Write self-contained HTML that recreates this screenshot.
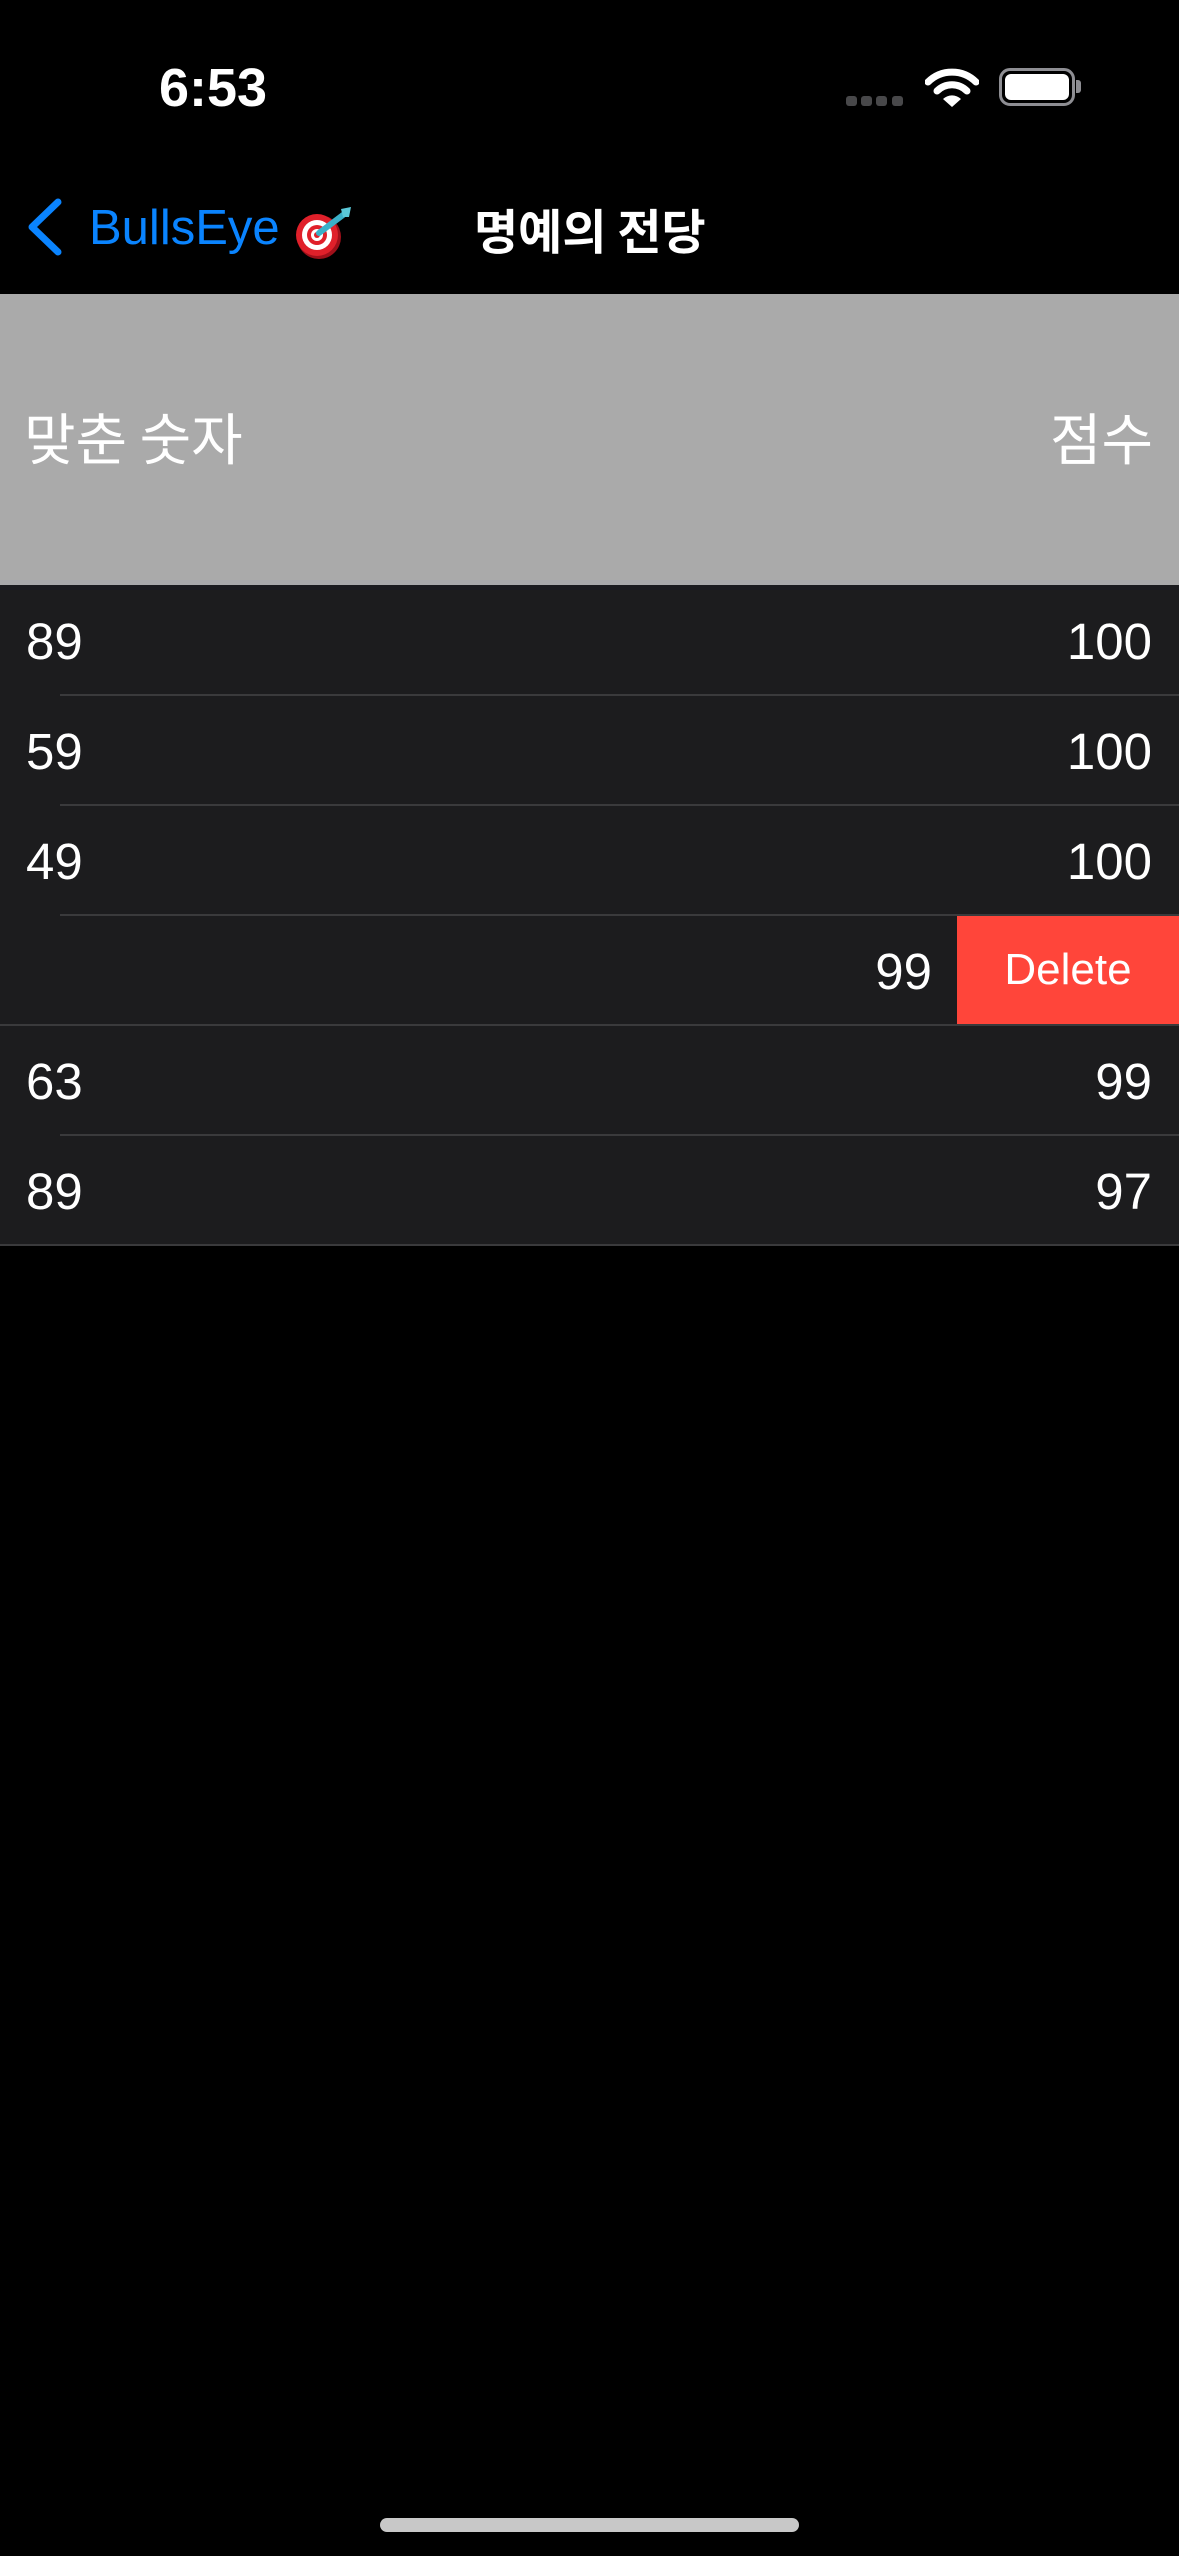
<!DOCTYPE html>
<html><head><meta charset="utf-8"><style>
*{margin:0;padding:0;box-sizing:border-box}
body{width:1179px;height:2556px;background:#000;position:relative;overflow:hidden;font-family:"Liberation Sans","Noto Sans CJK KR",sans-serif;color:#fff}
.abs{position:absolute}
.time{left:159px;top:56px;font-size:54px;font-weight:bold;line-height:64px}
.dot{position:absolute;top:96px;width:11px;height:10px;border-radius:3px;background:#48484a}
.title{left:474px;top:196px;font-size:48px;font-weight:bold;line-height:64px;font-family:"Noto Sans CJK KR",sans-serif}
.back{left:89px;top:196px;font-size:49px;color:#0a84ff;line-height:64px}
.hdr{left:0;top:294px;width:1179px;height:291px;background:#aaaaaa}
.hdr span{position:absolute;top:103px;font-size:56px;line-height:80px;font-family:"Noto Sans CJK KR",sans-serif;font-weight:400}
.row{position:absolute;left:0;width:1179px;height:110px;background:#1c1c1e}
.row .l,.row .r{position:absolute;top:22px;font-size:51px;line-height:70px}
.row .l{left:26px}.row .r{right:27px}
.sep{position:absolute;height:2px;background:#3a3a3c;right:0}
</style></head><body>
<div class="abs time">6:53</div>
<div class="dot" style="left:846px"></div><div class="dot" style="left:861px"></div><div class="dot" style="left:876px"></div><div class="dot" style="left:892px"></div>
<svg class="abs" style="left:925px;top:66px" width="54" height="42" viewBox="0 0 54 42">
<path d="M3 16 A34 34 0 0 1 51 16" stroke="#fff" stroke-width="7" fill="none" stroke-linecap="round"/>
<path d="M12 25 A21 21 0 0 1 42 25" stroke="#fff" stroke-width="7" fill="none" stroke-linecap="round"/>
<path d="M18 33 L27 41 L36 33 A13 13 0 0 0 18 33Z" fill="#fff"/>
</svg>
<div class="abs" style="left:999px;top:68px;width:76px;height:38px;border:3px solid #8e8e93;border-radius:11px"></div>
<div class="abs" style="left:1005px;top:74px;width:64px;height:26px;background:#fff;border-radius:6px"></div>
<div class="abs" style="left:1076px;top:80px;width:5px;height:13px;background:#8e8e93;border-radius:0 3px 3px 0"></div>

<svg class="abs" style="left:26px;top:198px" width="38" height="58" viewBox="0 0 38 58"><path d="M32 4 L6 29 L32 54" stroke="#0a84ff" stroke-width="7" fill="none" stroke-linecap="round" stroke-linejoin="round"/></svg>
<div class="abs back">BullsEye</div>
<svg class="abs" style="left:293px;top:203px" width="64" height="58" viewBox="0 0 64 58">
<circle cx="26" cy="34" r="22" fill="#a0101a"/><circle cx="24" cy="32" r="21" fill="#e0202a"/><circle cx="24" cy="32" r="15" fill="#fff"/><circle cx="24" cy="32" r="10" fill="#e0202a"/><circle cx="24" cy="32" r="6" fill="#fff"/><circle cx="24" cy="32" r="3" fill="#e0202a"/>
<path d="M26 30 L50 12" stroke="#3ab0c8" stroke-width="6" stroke-linecap="round"/><path d="M48 6 L58 4 L56 14 L50 14Z" fill="#5ac8d8"/>
</svg>
<div class="abs title">명예의 전당</div>

<div class="abs hdr"><span style="left:24px">맞춘 숫자</span><span style="right:26px">점수</span></div>

<div class="row" style="top:585px"><span class="l">89</span><span class="r">100</span></div>
<div class="row" style="top:695px"><span class="l">59</span><span class="r">100</span></div>
<div class="row" style="top:805px"><span class="l">49</span><span class="r">100</span></div>
<div class="row" style="top:915px"><span class="r" style="right:247px">99</span>
<div style="position:absolute;left:957px;top:0;width:222px;height:110px;background:#ff453a;font-size:44px;line-height:110px;text-align:center">Delete</div></div>
<div class="row" style="top:1025px"><span class="l">63</span><span class="r">99</span></div>
<div class="row" style="top:1135px"><span class="l">89</span><span class="r">97</span></div>
<div class="sep" style="top:694px;left:60px"></div>
<div class="sep" style="top:804px;left:60px"></div>
<div class="sep" style="top:914px;left:60px"></div>
<div class="sep" style="top:1024px;left:0"></div>
<div class="sep" style="top:1134px;left:60px"></div>
<div class="sep" style="top:1244px;left:0"></div>

<div class="abs" style="left:380px;top:2518px;width:419px;height:14px;border-radius:7px;background:#c8c8c8"></div>
</body></html>
